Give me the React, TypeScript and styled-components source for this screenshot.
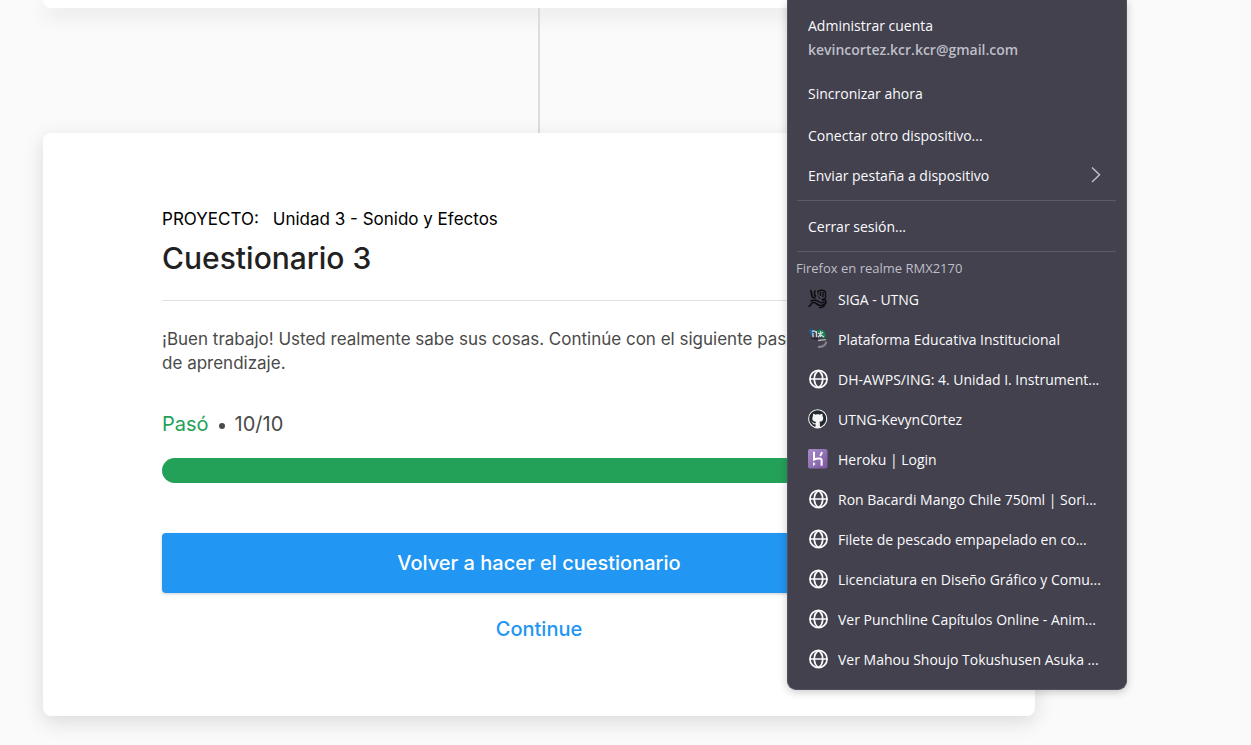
import React from "react";
import styled, { createGlobalStyle } from "styled-components";
import { FaGithub } from "react-icons/fa";

const GlobalStyle = createGlobalStyle`
  *, *::before, *::after { box-sizing: border-box; }
  body {
    margin: 0;
    background: #fafafa;
    font-family: Inter, "Liberation Sans", sans-serif;
    overflow-x: hidden;
  }
`;

const Page = styled.div`
  position: relative;
  min-height: 100vh;
  padding: 0 216px 28px 43px;
`;

const Path = styled.main`
  display: flex;
  flex-direction: column;
  align-items: center;
`;

const Card = styled.section`
  width: 100%;
  padding: 74px 12% 75px;
  background: #fff;
  border-radius: 8px;
  box-shadow: 0 6px 20px rgba(0, 0, 0, 0.13);
`;

const PreviousCard = styled(Card)`
  height: 8px;
  padding: 0;
  border-radius: 0 0 8px 8px;
`;

const Connector = styled.div`
  width: 2px;
  height: 125px;
  background: #dcdcdc;
`;

const Project = styled.p`
  display: flex;
  gap: 14px;
  margin: 0;
  font-size: 17px;
  line-height: 24px;
  color: #000;
`;

const Title = styled.h1`
  margin: 7px 0 0;
  padding-bottom: 22px;
  border-bottom: 1px solid #e0e0e0;
  font-size: 30px;
  line-height: 40px;
  font-weight: 500;
  color: #212121;
`;

const Message = styled.p`
  margin: 26px 0 37px;
  font-size: 17px;
  line-height: 24px;
  color: #4a4a4a;
`;

const Score = styled.div`
  display: flex;
  align-items: center;
  gap: 10px;
  font-size: 20px;
  line-height: 24px;
  color: #4a4a4a;
`;

const Passed = styled.span`
  color: #24a159;
`;

const Dot = styled.span`
  width: 6px;
  height: 6px;
  margin-top: 4px;
  border-radius: 50%;
  background: #4a4a4a;
`;

const Progress = styled.div`
  height: 25px;
  margin: 22px 0 50px;
  border-radius: 13px;
  background: #24a159;
`;

const Action = styled.button<{ $primary?: boolean }>`
  display: block;
  width: 100%;
  height: ${(p) => (p.$primary ? "60px" : "24px")};
  margin-top: ${(p) => (p.$primary ? "0" : "24px")};
  padding: 0;
  border: 0;
  border-radius: 4px;
  background: ${(p) => (p.$primary ? "#2196f3" : "transparent")};
  box-shadow: ${(p) => (p.$primary ? "0 1px 3px rgba(0, 0, 0, 0.2)" : "none")};
  color: ${(p) => (p.$primary ? "#fff" : "#2196f3")};
  font-family: inherit;
  font-size: 20px;
  line-height: 24px;
  font-weight: 500;
  cursor: pointer;
`;

const Menu = styled.aside`
  position: absolute;
  top: 0;
  right: 124px;
  width: 340px;
  padding: 14px 9px 10px 8px;
  border: 1px solid #52525e;
  border-top: 0;
  border-radius: 0 0 9px 9px;
  background: #42414d;
  box-shadow: 0 2px 8px rgba(0, 0, 0, 0.22);
  color: #fbfbfe;
  font-family: "Open Sans", "Noto Sans", sans-serif;
  font-size: 14px;
`;

const MenuItem = styled.button`
  display: flex;
  align-items: center;
  gap: 10px;
  width: 100%;
  height: 40px;
  padding: 0 12px;
  border: 0;
  background: transparent;
  color: inherit;
  font: inherit;
  text-align: left;
  white-space: nowrap;
  cursor: pointer;
`;

const AccountItem = styled(MenuItem)`
  flex-direction: column;
  align-items: flex-start;
  gap: 0;
  height: 48px;
  margin-bottom: 11px;
  line-height: 24px;
`;

const Email = styled.span`
  font-weight: 600;
  color: #bfbfc9;
`;

const SyncItem = styled(MenuItem)`
  margin-bottom: 2px;
`;

const ItemLabel = styled.span`
  flex: 1;
`;

const Separator = styled.hr`
  height: 1px;
  margin: 5px 1px;
  border: 0;
  background: #5b5b66;
`;

const DeviceName = styled.h2`
  margin: 0;
  font-size: 13px;
  line-height: 22px;
  font-weight: 400;
  color: #bfbfc9;
`;

const TabIcon = styled.svg`
  flex: none;
  width: 20px;
  height: 20px;
  overflow: visible;
`;

const Chevron = styled.svg`
  width: 18px;
  height: 18px;
`;

const GlobeIcon = () => (
  <TabIcon viewBox="0 0 20 20" fill="none" stroke="#fbfbfe" strokeWidth="1.7" aria-hidden="true">
    <circle cx="10.5" cy="10" r="8.6" />
    <path d="M2 10h17M10.5 1.500C7.400 3.500 6.300 6.700 6.300 10s1.100 6.500 4.200 8.500M10.500 1.500c3.100 2 4.200 5.200 4.200 8.500s-1.100 6.500-4.200 8.500" />
  </TabIcon>
);

const GithubIcon = () => (
  <TabIcon viewBox="0 0 20 20" aria-hidden="true">
    <circle cx="9.7" cy="9.8" r="9.6" fill="#f4f4f6" />
    <FaGithub x="0.9" y="0.9" size={17.600} color="#24292e" />
  </TabIcon>
);

const HerokuIcon = () => (
  <TabIcon viewBox="0 0 20 20" aria-hidden="true">
    <defs>
      <linearGradient id="heroku" x1="0" y1="0" x2="1" y2="1">
        <stop offset="0" stopColor="#a98bcb" />
        <stop offset="1" stopColor="#7a569f" />
      </linearGradient>
    </defs>
    <rect x="0" y="0" width="19.500" height="19.500" rx="2" fill="url(#heroku)" />
    <path d="M6 2.800v7.700c2-.9 7.600-2.300 7.600.7v5.500M13.800 3c-.1 1.700-.8 2.800-1.700 3.800" fill="none" stroke="#fff" strokeWidth="2" />
    <path d="M5 12.900l2.600 2-2.600 2z" fill="#fff" />
  </TabIcon>
);

const SigaIcon = () => (
  <TabIcon viewBox="0 0 20 20" fill="none" stroke="#0d0d12" aria-hidden="true">
    <path d="M2 1.500c1.500 0 1.600 1 1.600 3.500 0 3 1.200 4 4 4M7.500 1.500C6 3 6 6.500 8 7.500" strokeWidth="1.700" />
    <path d="M9.500 3.500c1-3 7-3 8 0v5.500c-1.500 2-4 1-6-.5-1.500-1.500-2-3.500-2-5zM12.500 3v4M15 3v5" strokeWidth="1.300" />
    <path d="M.5 17.500c3-.5 2-4 5-4 3.500 0 3.500 3 7 3 3 0 5-1 5.500-3.500 0-2-2-2.500-4-2" strokeWidth="1.700" />
    <path d="M2.500 12c4-1.500 6-1 8 .5s4 1.500 6 .5M11 18.200c2 .6 4-.2 5.500-1.200" strokeWidth="1.500" />
    <path d="M8 3c1 3 3 4 6 7" stroke="#6b6b76" strokeWidth="0.700" />
  </TabIcon>
);

const PlatformIcon = () => (
  <TabIcon viewBox="0 0 20 20" fill="none" aria-hidden="true">
    <path d="M1 .5h4v7C3 6 1.500 4 1 .5z" fill="#1768a5" />
    <path d="M4 2.500c2-1 3.500-.5 4 1M5 4v4.500M8.500 2v6" stroke="#c9dbe2" strokeWidth="1.300" />
    <path d="M9 1.200c4-1.500 8-.5 9 5.500l-2 3-5-4z" fill="#168052" />
    <path d="M10 4l6 4M15 3l-5 5M12.500 2v6" stroke="#d0dcda" strokeWidth="1.200" />
    <path d="M3 9.500c3-1 5 .5 7 1" stroke="#26262e" strokeWidth="1.500" />
    <path d="M10 11.500l8-.8" stroke="#b1b1b7" strokeWidth="1.300" />
    <path d="M18 12.500c.5 3-2.500 5.500-8 5.500" stroke="#85858f" strokeWidth="2.200" />
  </TabIcon>
);

const tabs = [
  { label: "SIGA - UTNG", Icon: SigaIcon },
  { label: "Plataforma Educativa Institucional", Icon: PlatformIcon },
  { label: "DH-AWPS/ING: 4. Unidad I. Instrument...", Icon: GlobeIcon },
  { label: "UTNG-KevynC0rtez", Icon: GithubIcon },
  { label: "Heroku | Login", Icon: HerokuIcon },
  { label: "Ron Bacardi Mango Chile 750ml | Sori...", Icon: GlobeIcon },
  { label: "Filete de pescado empapelado en co...", Icon: GlobeIcon },
  { label: "Licenciatura en Diseño Gráfico y Comu...", Icon: GlobeIcon },
  { label: "Ver Punchline Capítulos Online - Anim...", Icon: GlobeIcon },
  { label: "Ver Mahou Shoujo Tokushusen Asuka ...", Icon: GlobeIcon },
];

export default function App() {
  return (
    <Page>
      <GlobalStyle />
      <Path>
        <PreviousCard />
        <Connector />
        <Card>
          <Project>
            <span>PROYECTO:</span>
            <span>Unidad 3 - Sonido y Efectos</span>
          </Project>
          <Title>Cuestionario 3</Title>
          <Message>
            ¡Buen trabajo! Usted realmente sabe sus cosas. Continúe con el siguiente paso
            <br />
            de aprendizaje.
          </Message>
          <Score>
            <Passed>Pasó</Passed>
            <Dot />
            <span>10/10</span>
          </Score>
          <Progress role="progressbar" aria-label="Resultado" aria-valuenow={10} aria-valuemin={0} aria-valuemax={10} />
          <Action $primary>Volver a hacer el cuestionario</Action>
          <Action>Continue</Action>
        </Card>
      </Path>
      <Menu>
        <AccountItem>
          <span>Administrar cuenta</span>
          <Email>kevincortez.kcr.kcr@gmail.com</Email>
        </AccountItem>
        <SyncItem>Sincronizar ahora</SyncItem>
        <MenuItem>Conectar otro dispositivo...</MenuItem>
        <MenuItem>
          <ItemLabel>Enviar pestaña a dispositivo</ItemLabel>
          <Chevron viewBox="0 0 18 18" fill="none" stroke="#bfbfc9" strokeWidth="1.500" aria-hidden="true">
            <path d="M5 1.500l7.500 7.300L5 16" />
          </Chevron>
        </MenuItem>
        <Separator />
        <MenuItem>Cerrar sesión...</MenuItem>
        <Separator />
        <DeviceName>Firefox en realme RMX2170</DeviceName>
        {tabs.map(({ label, Icon }) => (
          <MenuItem key={label}>
            <Icon />
            {label}
          </MenuItem>
        ))}
      </Menu>
    </Page>
  );
}
